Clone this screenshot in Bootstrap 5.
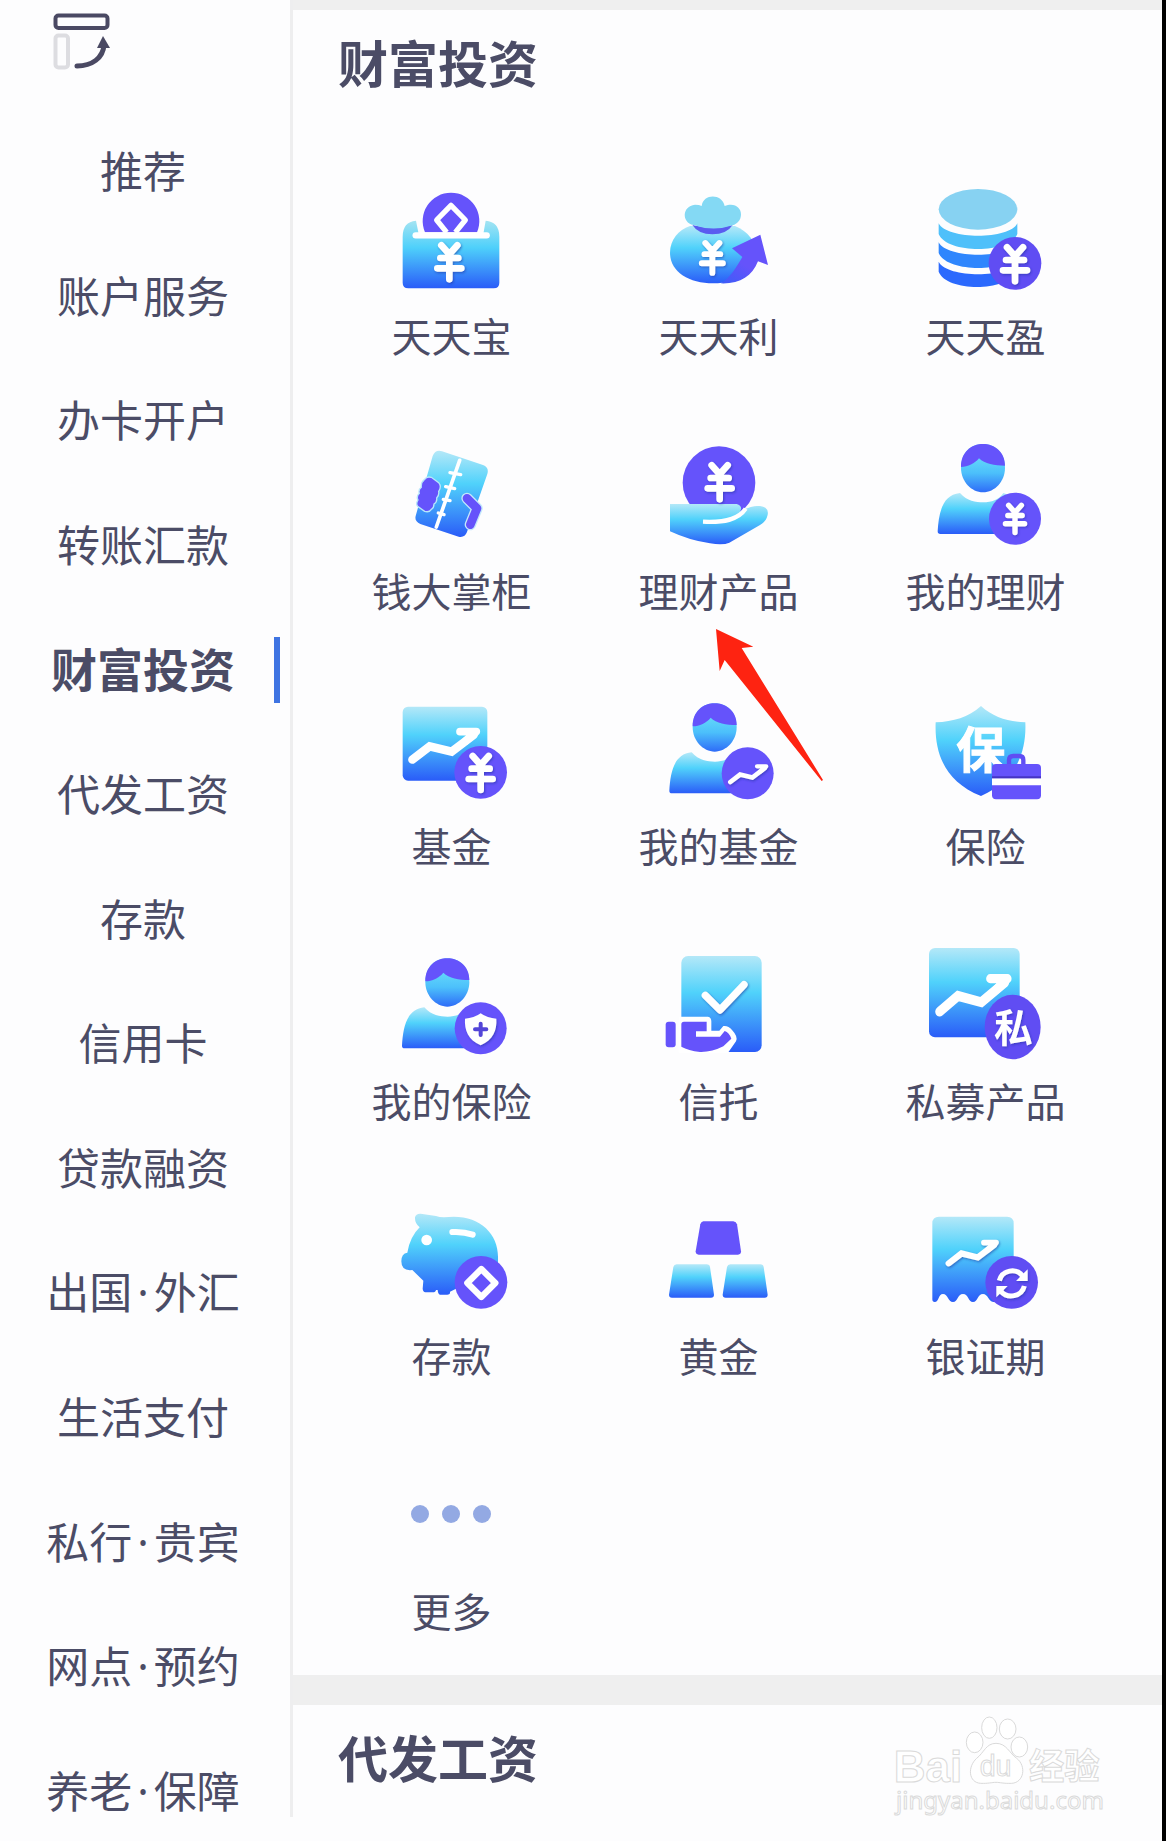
<!DOCTYPE html>
<html lang="zh-CN">
<head>
<meta charset="utf-8">
<meta name="viewport" content="width=device-width, initial-scale=1">
<title>财富投资</title>
<link href="https://cdn.jsdelivr.net/npm/bootstrap@5.3.0/dist/css/bootstrap.min.css" rel="stylesheet">
<style>
  body { font-family: "Noto Sans CJK SC", "Noto Sans", sans-serif; color: #4b4c66; background: #fdfdfe; }
  a { color: inherit; text-decoration: none; }
  .app-shell { border-right: 4px solid #000; }
  .side-menu { flex: 0 0 293px; border-right: 3px solid #eeeeef; padding: 10px 0 3px; }
  .view-toggle { margin-left: 50px; width: 62px; height: 62px; }
  .side-list { margin-top: 72px; font-size: 43px; line-height: 50px; }
  .side-list a.active { font-size: 46px; font-weight: 700; }
  .side-list a.active::after { content: ""; position: absolute; right: 10px; top: -5px; width: 6px; height: 66px; background: #3f74e2; }
  .mid-dot { font-family: "Noto Sans", sans-serif; padding: 0 5px; line-height: 1; }
  .band-top { height: 10px; background: #efefef; }
  .band { height: 30px; background: #efefef; }
  .block-title { font-size: 50px; line-height: 60px; font-weight: 700; padding: 21px 0 0 45px; }
  .tile-grid { padding: 87px 43px 35px 25px; row-gap: 68px; }
  .tile { line-height: 60px; font-size: 40px; white-space: nowrap; }
  .tile .tile-icon { width: 130px; height: 130px; margin-bottom: -3px; }
  .tile .pointer { position: absolute; width: 112px; height: 156px; left: calc(50% - 5px); top: calc(100% + 7px); z-index: 2; }
  .watermark { position: absolute; right: 55px; bottom: 21px; width: 214px; height: 107px; }
</style>
<script src="https://cdn.jsdelivr.net/npm/bootstrap@5.3.0/dist/js/bootstrap.bundle.min.js"></script>
</head>
<body>
<svg width="0" height="0" class="position-absolute" aria-hidden="true">
  <defs>
    <linearGradient id="sky" x1="0" y1="0" x2="0" y2="1">
      <stop offset="0" stop-color="#b4e8f8"/><stop offset=".38" stop-color="#50d2fb"/><stop offset="1" stop-color="#2a5cf8"/>
    </linearGradient>
    <linearGradient id="face" x1="0" y1="0" x2="0" y2="1">
      <stop offset=".3" stop-color="#62d6fa"/><stop offset=".6" stop-color="#4cc0fb"/><stop offset="1" stop-color="#2e6cf8"/>
    </linearGradient>
    <linearGradient id="swoosh" x1="0" y1="1" x2=".6" y2="0">
      <stop offset="0" stop-color="#3b5cf8"/><stop offset=".5" stop-color="#6553fb"/>
    </linearGradient>
    <filter id="sh" x="-30%" y="-30%" width="170%" height="170%"><feDropShadow dx="3" dy="4" stdDeviation="3" flood-color="#1c2f9c" flood-opacity=".55"/></filter>
    <g id="yen" fill="none" stroke="#fff" stroke-width="20" stroke-linecap="round" stroke-linejoin="round" filter="url(#sh)">
      <path d="M-24 0L0 27L24 0M0 27V102M-27 38H27M-36 69H36"/>
    </g>
    <g id="trend">
      <path d="M0 0L52-40L118-24L184-74" fill="none" stroke="#fff" stroke-width="25" stroke-linecap="round"/>
      <path d="M143-84H192L160-56" fill="none" stroke="#fff" stroke-width="23" stroke-linecap="round" stroke-linejoin="round"/>
    </g>
    <g id="person">
      <path d="M49 308C52 255 62 198 116 193C138 218 163 221 186 221C210 221 232 214 246 193C290 205 290 260 290 316H57Q49 316 49 308Z" fill="url(#sky)"/>
      <path d="M119 118C119 70 150 46 185 46C220 46 251 70 251 118C251 158 220 191 185 191C150 191 119 158 119 118Z" fill="url(#face)"/>
      <path d="M119 115C119 70 150 46 185 46C220 46 251 70 251 111C220 111 190 106 173 89C160 105 140 115 119 115Z" fill="#6553fb"/>
    </g>
  </defs>
</svg>

<div class="app-shell d-flex min-vh-100">
  <aside class="side-menu d-flex flex-column mb-4">
    <button type="button" class="view-toggle btn p-0 border-0 d-block" aria-label="切换布局">
      <svg class="d-block" viewBox="50 10 62 62" width="62" height="62" fill="none">
        <rect x="55.500" y="15.500" width="52" height="12.500" rx="3" stroke="#4a4963" stroke-width="4"/>
        <rect x="55.500" y="35.500" width="12.500" height="32" rx="3" stroke="#dddde1" stroke-width="4"/>
        <path d="M77 66C92 66 103 58 104 45" stroke="#4a4963" stroke-width="5" stroke-linecap="round"/>
        <path d="M103 36L110 48H97Z" fill="#4a4963"/>
      </svg>
    </button>
    <nav class="side-list d-flex flex-column flex-grow-1 justify-content-between text-center">
      <a class="pe-1" href="#">推荐</a>
      <a class="pe-1" href="#">账户服务</a>
      <a class="pe-1" href="#">办卡开户</a>
      <a class="pe-1" href="#">转账汇款</a>
      <a class="pe-1 position-relative active" href="#" aria-current="true">财富投资</a>
      <a class="pe-1" href="#">代发工资</a>
      <a class="pe-1" href="#">存款</a>
      <a class="pe-1" href="#">信用卡</a>
      <a class="pe-1" href="#">贷款融资</a>
      <a class="pe-1" href="#">出国<span class="mid-dot">·</span>外汇</a>
      <a class="pe-1" href="#">生活支付</a>
      <a class="pe-1" href="#">私行<span class="mid-dot">·</span>贵宾</a>
      <a class="pe-1" href="#">网点<span class="mid-dot">·</span>预约</a>
      <a class="pe-1" href="#">养老<span class="mid-dot">·</span>保障</a>
    </nav>
  </aside>

  <main class="flex-grow-1 d-flex flex-column">
    <div class="band-top"></div>
    <section>
      <h1 class="block-title m-0">财富投资</h1>
      <div class="tile-grid row row-cols-3 g-0 text-center">
        <a class="tile col d-flex flex-column align-items-center" href="#">
          <svg class="tile-icon" viewBox="18 24 390 390">
            <linearGradient id="pocket" x1="0" y1="0" x2="0" y2="1"><stop offset="0" stop-color="#a4e4f2"/><stop offset=".4" stop-color="#4ed0fb"/><stop offset="1" stop-color="#2a5cf8"/></linearGradient>
            <path d="M68 200Q68 155 108 152L116 192H310L317 152Q358 155 358 200V338Q358 355 341 355H85Q68 355 68 338Z" fill="url(#pocket)"/>
            <path d="M135 187A85 85 0 1 1 291 187Z" fill="#6553fb"/>
            <path d="M200 187L170 150L213 106L256 150L226 187" fill="none" stroke="#fff" stroke-width="16" stroke-linejoin="round"/>
            <path d="M107 196H320" stroke="#fff" stroke-width="19" stroke-linecap="round"/>
            <use href="#yen" x="208" y="226"/>
          </svg>
          <span>天天宝</span>
        </a>
        <a class="tile col d-flex flex-column align-items-center" href="#">
          <svg class="tile-icon" viewBox="819 24 390 390">
            <path d="M930 168H1065C1105 185 1128 215 1128 250C1128 305 1075 340 1000 340C925 340 870 305 870 248C870 210 895 180 930 168Z" fill="url(#sky)"/>
            <path d="M937 165Q1000 182 1058 165Q1040 193 997 193Q955 193 937 165Z" fill="#5a5cf0"/>
            <path d="M940 165C905 158 905 108 945 104Q958 104 965 108C970 70 1026 70 1034 108C1062 96 1084 112 1083 134C1082 152 1072 160 1058 166Q1000 186 940 165Z" fill="#84d9f4"/>
            <path d="M1022 340C1050 325 1070 290 1087 261L1056 235L1141 194L1164 285L1134 274C1115 320 1080 342 1022 340Z" fill="url(#swoosh)"/>
            <g transform="translate(997 219) scale(.88)"><use href="#yen"/></g>
          </svg>
          <span>天天利</span>
        </a>
        <a class="tile col d-flex flex-column align-items-center" href="#">
          <svg class="tile-icon" viewBox="420 24 390 390">
            <ellipse cx="594" cy="118" rx="118" ry="61" fill="#87d2f2"/>
            <path d="M476 160C500 210 690 210 712 160V192C690 252 500 252 476 192Z" fill="#4fc0fa"/>
            <path d="M476 217C500 267 690 267 712 217V249C690 309 500 309 476 249Z" fill="#2f86fd"/>
            <path d="M476 275C500 325 690 325 712 275V305C680 366 500 366 476 305Z" fill="#2b69fd"/>
            <circle cx="705" cy="280" r="79" fill="#604df3"/>
            <use href="#yen" x="705" y="232"/>
          </svg>
          <span>天天盈</span>
        </a>
        <a class="tile col d-flex flex-column align-items-center" href="#">
          <svg class="tile-icon" viewBox="18 39 390 390">
            <path d="M158 108Q166 88 186 94L309 135Q328 142 322 162L261 336Q254 354 236 350L121 312Q101 304 108 284Z" fill="url(#sky)"/>
            <path d="M239 121L169 321" stroke="#fff" stroke-width="11" stroke-linecap="round"/>
            <path d="M210 158L242 164M197 200L224 206M190 238L210 242M175 279L192 284" stroke="#fff" stroke-width="10" stroke-linecap="round"/>
            <path d="M134 178Q140 168 154 172L176 188Q186 200 176 214Q178 226 170 234Q172 246 162 252Q162 264 154 268Q148 278 134 274L114 260Q106 252 114 240Q108 230 118 220Q114 210 124 202Q122 188 134 178Z" fill="#6553fb" stroke="#b8e6fb" stroke-width="4"/>
            <path d="M261 235L291 265L271 314" fill="none" stroke="#c3e8fc" stroke-width="34" stroke-linecap="round" stroke-linejoin="round"/>
            <path d="M261 235L291 265L271 314" fill="none" stroke="#6553fb" stroke-width="26" stroke-linecap="round" stroke-linejoin="round"/>
          </svg>
          <span>钱大掌柜</span>
        </a>
        <a class="tile col d-flex flex-column align-items-center position-relative" href="#">
          <svg class="tile-icon" viewBox="819 39 390 390">
            <circle cx="1017" cy="188" r="109" fill="#6553fb"/>
            <path d="M870 252H1070Q1090 258 1080 275C1095 270 1105 258 1140 258Q1170 262 1162 288Q1158 305 1140 315L1048 368Q1030 376 990 370Q930 362 870 334Z" fill="url(#sky)"/>
            <path d="M969 305C1030 308 1075 300 1097 266" fill="none" stroke="#fff" stroke-width="13"/>
            <use href="#yen" x="1019" y="136"/>
          </svg>
          <span>理财产品</span>
          <svg class="pointer" viewBox="39 21 336 468"><path d="M48 27L160 80L125 84L369 480L365 483L74 120L59 153Z" fill="#fe2311"/></svg>
        </a>
        <a class="tile col d-flex flex-column align-items-center" href="#">
          <svg class="tile-icon" viewBox="0 0 390 390">
            <use href="#person" x="4" y="-13"/>
            <circle cx="285" cy="257" r="78" fill="#6553fb"/>
            <g transform="translate(285 217) scale(.8)"><use href="#yen"/></g>
          </svg>
          <span>我的理财</span>
        </a>
        <a class="tile col d-flex flex-column align-items-center" href="#">
          <svg class="tile-icon" viewBox="18 24 390 390">
            <rect x="68" y="80" width="254" height="222" rx="16" fill="url(#sky)"/>
            <use href="#trend" x="97" y="239"/>
            <circle cx="302" cy="277" r="79" fill="#6553fb"/>
            <use href="#yen" x="302" y="228"/>
          </svg>
          <span>基金</span>
        </a>
        <a class="tile col d-flex flex-column align-items-center" href="#">
          <svg class="tile-icon" viewBox="0 0 390 390">
            <use href="#person"/>
            <circle cx="284" cy="256" r="78" fill="#6553fb"/>
            <g filter="url(#sh)"><g transform="translate(232 282) scale(.56)"><use href="#trend"/></g></g>
          </svg>
          <span>我的基金</span>
        </a>
        <a class="tile col d-flex flex-column align-items-center" href="#">
          <svg class="tile-icon" viewBox="660 204 390 390">
            <path d="M843 258C880 292 925 305 976 307C980 400 945 485 843 528C735 485 703 400 707 307C760 305 805 292 843 258Z" fill="url(#sky)"/>
            <text x="843" y="443" font-size="148" font-weight="700" fill="#fff" stroke="#fff" stroke-width="3" text-anchor="middle">保</text>
            <path d="M927 435V420Q927 408 940 408H958Q970 408 970 420V435" fill="none" stroke="#604df3" stroke-width="13"/>
            <rect x="876" y="432" width="147" height="106" rx="12" fill="#6553fb"/>
            <path d="M876 475H1023V496H876Z" fill="#fff"/>
            <path d="M876 469H1023V475H876Z" fill="#4634c4"/>
          </svg>
          <span>保险</span>
        </a>
        <a class="tile col d-flex flex-column align-items-center" href="#">
          <svg class="tile-icon" viewBox="0 0 390 390">
            <use href="#person" x="-1"/>
            <circle cx="284" cy="256" r="78" fill="#6553fb"/>
            <path d="M284 211Q304 226 331 227C333 262 322 290 284 307C246 290 235 262 237 227Q264 226 284 211Z" fill="#fff" filter="url(#sh)"/>
            <path d="M284 242V276M267 259H301" stroke="#5345d8" stroke-width="12" stroke-linecap="round"/>
          </svg>
          <span>我的保险</span>
        </a>
        <a class="tile col d-flex flex-column align-items-center" href="#">
          <svg class="tile-icon" viewBox="819 39 390 390">
            <rect x="904" y="78" width="241" height="288" rx="20" fill="url(#sky)"/>
            <path d="M976 196L1020 240L1092 164" fill="none" stroke="#fff" stroke-width="22" stroke-linecap="round" stroke-linejoin="round" filter="url(#sh)"/>
            <path d="M896 260H984Q994 262 994 274V302L1018 302L1030 288Q1045 286 1056 300Q1075 320 1068 334L1044 368H896Z" fill="#fff"/>
            <rect x="857" y="275" width="30" height="77" rx="9" fill="#6553fb"/>
            <path d="M912 275H980V304H948V320H1020L1034 303Q1048 308 1054 326L1030 349Q995 367 960 366Q925 362 904 350V283Q904 275 912 275Z" fill="#6553fb"/>
          </svg>
          <span>信托</span>
        </a>
        <a class="tile col d-flex flex-column align-items-center" href="#">
          <svg class="tile-icon" viewBox="480 39 390 390">
            <rect x="507" y="54" width="272" height="268" rx="18" fill="url(#sky)"/>
            <g transform="translate(539 245) scale(1.06 1.18)"><use href="#trend"/></g>
            <ellipse cx="758" cy="291" rx="84" ry="97" fill="#604df3"/>
            <text x="760" y="336" font-size="116" font-weight="700" fill="#fff" text-anchor="middle" filter="url(#sh)">私</text>
          </svg>
          <span>私募产品</span>
        </a>
        <a class="tile col d-flex flex-column align-items-center" href="#">
          <svg class="tile-icon" viewBox="18 24 390 390">
            <path d="M105 82Q108 70 122 71L168 78Q178 82 192 82C290 68 354 125 354 200V290H240L210 305V310Q209 314 202 314H180Q174 313 173 300H168Q167 307 158 307H136Q129 306 128 296L130 272L97 240Q64 244 64 214Q64 190 82 188Q90 140 119 112Q104 100 105 82Z" fill="url(#sky)"/>
            <circle cx="140" cy="150" r="16" fill="#fff"/>
            <path d="M217 126Q250 124 278 134" fill="none" stroke="#fff" stroke-width="18" stroke-linecap="round"/>
            <circle cx="303" cy="277" r="79" fill="#6553fb"/>
            <path d="M304 237L346 279L304 321L262 279Z" fill="none" stroke="#fff" stroke-width="19" stroke-linejoin="round"/>
          </svg>
          <span>存款</span>
        </a>
        <a class="tile col d-flex flex-column align-items-center" href="#">
          <svg class="tile-icon" viewBox="819 24 390 390">
            <path d="M970 94H1060Q1069 95 1071 103L1083 184Q1083 194 1074 194H956Q947 194 947 184L961 103Q963 95 970 94Z" fill="#6553fb"/>
            <path d="M890 223H980Q989 223 990 231L1002 314Q1002 323 993 323H876Q867 323 867 314L880 231Q882 223 890 223Z" fill="url(#sky)"/>
            <path d="M1051 223H1141Q1150 223 1151 231L1163 314Q1163 323 1154 323H1037Q1028 323 1028 314L1041 231Q1043 223 1051 223Z" fill="url(#sky)"/>
          </svg>
          <span>黄金</span>
        </a>
        <a class="tile col d-flex flex-column align-items-center" href="#">
          <svg class="tile-icon" viewBox="480 24 390 390">
            <path d="M517 100Q517 80 537 80H741Q761 80 761 100V336H700C685 334 684 312 669 312C652 312 654 336 639 336C624 336 626 312 609 312C592 312 594 336 579 336C564 336 564 312 549 312C534 312 538 336 524 336Q517 336 517 328Z" fill="url(#sky)"/>
            <g filter="url(#sh)"><g transform="translate(566 220) scale(.74)"><use href="#trend"/></g></g>
            <circle cx="755" cy="277" r="79" fill="#604df3"/>
            <g filter="url(#sh)"><path d="M718 272C726 240 768 232 788 258M793 288C785 320 743 328 723 304" fill="none" stroke="#fff" stroke-width="15"/>
            <path d="M803 238V273H768ZM709 322V288H743Z" fill="#fff"/></g>
          </svg>
          <span>银证期</span>
        </a>
        <a class="tile col d-flex flex-column align-items-center" href="#">
          <svg class="tile-icon" viewBox="0 0 130 130" fill="#93a9e3"><circle cx="34" cy="61" r="9"/><circle cx="65" cy="61" r="9"/><circle cx="96" cy="61" r="9"/></svg>
          <span>更多</span>
        </a>
      </div>
    </section>
    <div class="band"></div>
    <section class="position-relative flex-grow-1">
      <h2 class="block-title m-0">代发工资</h2>
      <svg class="watermark" viewBox="99 159 642 321" fill="#fff" stroke="#dadada" stroke-width="3">
        <text x="101" y="365" font-size="132" font-family="Liberation Sans, sans-serif" font-weight="700">Bai</text>
        <ellipse cx="344" cy="247" rx="25" ry="31"/><ellipse cx="388" cy="203" rx="23" ry="32"/><ellipse cx="443" cy="207" rx="25" ry="30"/><ellipse cx="478" cy="261" rx="25" ry="30"/>
        <path d="M408 250C440 250 448 280 470 295C500 318 492 368 455 370C430 371 420 367 408 367C395 367 385 371 362 370C325 368 322 320 350 295C372 278 378 250 408 250Z"/>
        <text x="359" y="349" font-size="86" font-family="Liberation Sans, sans-serif">du</text>
        <text x="507" y="356" font-size="106" font-weight="700" font-family="Noto Sans CJK SC, sans-serif">经验</text>
        <text x="108" y="448" font-size="72" font-family="Noto Sans, sans-serif">jingyan.baidu.com</text>
      </svg>
    </section>
  </main>
</div>
</body>
</html>
